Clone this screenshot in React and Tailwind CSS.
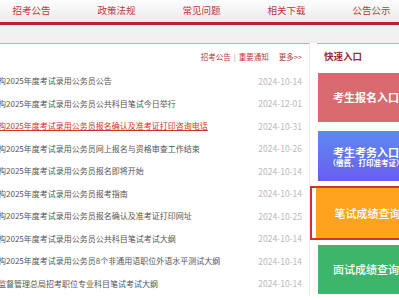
import React from 'react'

const NAV = ['招考公告', '政策法规', '常见问题', '相关下载', '公告公示']

const NEWS = [
  { title: '机构2025年度考试录用公务员公告', date: '2024-10-14' },
  { title: '机构2025年度考试录用公务员公共科目笔试今日举行', date: '2024-12-01' },
  { title: '机构2025年度考试录用公务员报名确认及准考证打印咨询电话', date: '2024-10-31', active: true },
  { title: '机构2025年度考试录用公务员网上报名与资格审查工作结束', date: '2024-10-26' },
  { title: '机构2025年度考试录用公务员报名即将开始', date: '2024-10-14' },
  { title: '机构2025年度考试录用公务员报考指南', date: '2024-10-14' },
  { title: '机构2025年度考试录用公务员报名确认及准考证打印网址', date: '2024-10-25' },
  { title: '机构2025年度考试录用公务员公共科目笔试考试大纲', date: '2024-10-14' },
  { title: '机构2025年度考试录用公务员8个非通用语职位外语水平测试大纲', date: '2024-10-14' },
  { title: '场监督管理总局招考职位专业科目笔试考试大纲', date: '2024-10-14' },
]

const font = { fontFamily: '"Noto Sans CJK SC", "Noto Sans", sans-serif' }

export default function App() {
  return (
    <div className="w-full h-[300px] overflow-hidden bg-white" style={font}>
      <div className="w-[440px]">
        {/* Nav */}
        <div className="h-[22px] bg-gradient-to-b from-[#fcfcfc] to-[#ececec] flex items-center ml-[-11px]">
          {NAV.map((n) => (
            <div key={n} className="w-[85px] shrink-0 text-center text-[9.5px] leading-none text-[#c0393c]">{n}</div>
          ))}
        </div>
        <div className="h-[3px] bg-[#b3262c]" />
        <div className="h-[18px] bg-[#f1f1f1]" />

        <div className="flex">
          {/* News list */}
          <div className="w-[310px] shrink-0 border-t border-r border-t-[#dba3a5] border-r-[#ececec] overflow-hidden">
            <div className="h-[26px] flex items-center justify-end pr-[7px] text-[7.5px] text-[#b8393c] gap-[2px]">
              <span>招考公告</span>
              <span className="text-[#999] px-[1px]">|</span>
              <span>重要通知</span>
              <span className="ml-[8px]">更多&gt;&gt;</span>
            </div>
            <div>
              {NEWS.map((item) => (
                <div key={item.title} className="h-[22.5px] flex items-center justify-between pr-[7px]">
                  <span
                    className={`ml-[-10px] whitespace-nowrap text-[8px] ${
                      item.active ? 'text-[#d0312d] underline' : 'text-[#555]'
                    }`}
                  >
                    {item.title}
                  </span>
                  <span className="text-[8.5px] text-[#bbb] shrink-0">{item.date}</span>
                </div>
              ))}
            </div>
          </div>

          {/* Quick links */}
          <div className="flex-1 pl-[7px]">
            <div className="border-t border-[#dba3a5] h-[30px] pl-[7px] pt-[5px] text-[9.5px] font-bold text-[#9c2b2d] leading-[14px]">
              快速入口
            </div>
            <div className="pl-[1px] flex flex-col">
              <div className="w-[96px] h-[49px] bg-[#d96b70] flex items-center justify-center text-white text-[11px] font-bold">
                考生报名入口
              </div>
              <div className="mt-[9px] w-[96px] h-[50px] bg-gradient-to-b from-[#5c8af0] to-[#6a5cf0] flex flex-col items-center justify-center text-white font-bold">
                <span className="text-[11px] leading-[12px]">考生考务入口</span>
                <span className="text-[7.5px] leading-[9px] whitespace-nowrap">（缴费、打印准考证）</span>
              </div>
              <div className="mt-[5px] ml-[-8px] w-[111px] h-[54px] border-2 border-[#d2332c] pl-[4px] bg-white">
                <div className="h-full bg-[#ffa31c] flex items-center justify-center text-white text-[11px] font-medium">
                  笔试成绩查询
                </div>
              </div>
              <div className="mt-[5px] w-[96px] h-[49px] bg-[#3db56a] flex items-center justify-center text-white text-[11px] font-medium">
                面试成绩查询
              </div>
            </div>
          </div>
        </div>
      </div>
    </div>
  )
}
